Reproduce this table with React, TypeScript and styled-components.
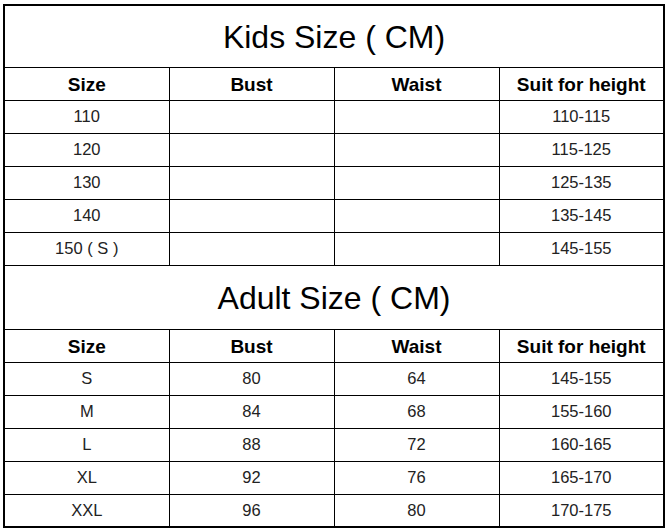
import styled, { createGlobalStyle } from 'styled-components';

const GlobalStyle = createGlobalStyle`
  html, body {
    margin: 0;
    padding: 0;
    background: #fff;
  }
  body {
    font-family: "Liberation Sans", Arial, sans-serif;
  }
`;

const kids = [
  ['110', '', '', '110-115'],
  ['120', '', '', '115-125'],
  ['130', '', '', '125-135'],
  ['140', '', '', '135-145'],
  ['150 ( S )', '', '', '145-155'],
];

const adults = [
  ['S', '80', '64', '145-155'],
  ['M', '84', '68', '155-160'],
  ['L', '88', '72', '160-165'],
  ['XL', '92', '76', '165-170'],
  ['XXL', '96', '80', '170-175'],
];

const headings = ['Size', 'Bust', 'Waist', 'Suit for height'];
const colWidths = [165, 165, 165, 165];

export default function App() {
  const section = (title: string, rows: string[][], titleHeight: number) => (
    <>
      <tr>
        <TitleCell colSpan={4} $height={titleHeight}>
          {title}
        </TitleCell>
      </tr>
      <tr>
        {headings.map((h) => (
          <HeadCell key={h}>{h}</HeadCell>
        ))}
      </tr>
      {rows.map((row, i) => (
        <tr key={i}>
          {row.map((c, j) => (
            <Cell key={j}>{c}</Cell>
          ))}
        </tr>
      ))}
    </>
  );

  return (
    <Page>
      <GlobalStyle />
      <Chart>
        <colgroup>
          {colWidths.map((w, i) => (
            <Col key={i} $width={w} />
          ))}
        </colgroup>
        <tbody>
          {section('Kids Size ( CM)', kids, 62)}
          {section('Adult Size ( CM)', adults, 64)}
        </tbody>
      </Chart>
    </Page>
  );
}

const Page = styled.div`
  padding: 4px 0 0 3px;
  width: 667px;
  height: 532px;
  box-sizing: border-box;
  overflow: hidden;
`;

const Chart = styled.table`
  border-collapse: collapse;
  table-layout: fixed;
  width: 660px;
  border: 2px solid #000;
`;

const Col = styled.col<{ $width: number }>`
  width: ${({ $width }) => $width}px;
`;

const BaseCell = styled.td`
  border: 1px solid #000;
  padding: 0;
  text-align: center;
  vertical-align: middle;
  height: 33px;
  box-sizing: border-box;
`;

const TitleCell = styled(BaseCell)<{ $height: number }>`
  height: ${({ $height }) => $height}px;
  font-size: 32px;
  color: #000;
  padding-top: 3px;
`;

const HeadCell = styled(BaseCell)`
  font-size: 19px;
  font-weight: bold;
  color: #000;
  padding-top: 2px;
`;

const Cell = styled(BaseCell)`
  font-size: 16.5px;
  color: #222;
`;
